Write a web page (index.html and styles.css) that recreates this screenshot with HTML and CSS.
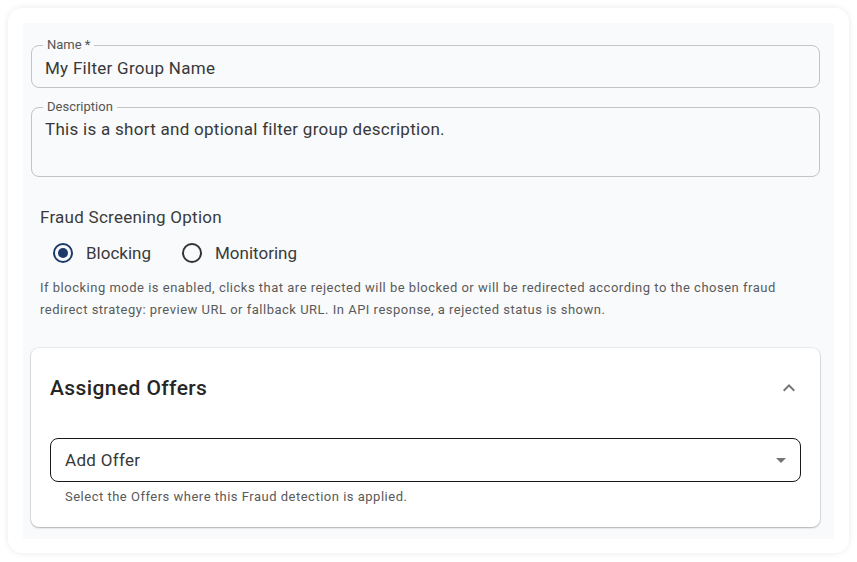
FILE: index.html
```html
<!DOCTYPE html>
<html lang="en">
<head>
  <meta charset="UTF-8">
  <meta name="viewport" content="width=device-width, initial-scale=1.0">
  <title>Filter Group</title>
  <link rel="stylesheet" href="styles.css">
</head>
<body>
  <div class="card">
    <div class="panel">
      <div class="field">
        <span class="field-label">Name *</span>
        <div class="field-value">My Filter Group Name</div>
      </div>
      <div class="field field-multiline">
        <span class="field-label">Description</span>
        <div class="field-value">This is a short and optional filter group description.</div>
      </div>

      <div class="option-group">
        <div class="option-title">Fraud Screening Option</div>
        <div class="radio-row">
          <label class="radio"><span class="radio-circle checked"></span>Blocking</label>
          <label class="radio"><span class="radio-circle"></span>Monitoring</label>
        </div>
        <p class="hint">If blocking mode is enabled, clicks that are rejected will be blocked or will be redirected according to the chosen fraud redirect strategy: preview URL or fallback URL. In API response, a rejected status is shown.</p>
      </div>

      <div class="accordion">
        <div class="accordion-head">
          <h2>Assigned Offers</h2>
          <svg class="icon" viewBox="0 0 24 24" width="24" height="24"><path d="M12 8l-6 6 1.41 1.41L12 10.83l4.59 4.58L18 14z"/></svg>
        </div>
        <div class="select">
          <span>Add Offer</span>
          <svg class="icon" viewBox="0 0 24 24" width="24" height="24"><path d="M7 10l5 5 5-5z"/></svg>
        </div>
        <p class="select-hint">Select the Offers where this Fraud detection is applied.</p>
      </div>
    </div>
  </div>
</body>
</html>
```

FILE: styles.css
```css
body { margin: 0; background: #fff; font-family: Roboto, "Liberation Sans", Arial, sans-serif; color: #333; }

.card { margin: 8px; width: 841px; height: 545px; box-sizing: border-box; padding: 15px; background: #fff; border-radius: 14px; box-shadow: 0 0 6px rgba(0,0,0,0.09); }
.panel { height: 516px; box-sizing: border-box; padding: 22px 14px 12px 8px; background: #f9fafc; }

.field { position: relative; height: 43px; box-sizing: border-box; border: 1px solid #c4c4c4; border-radius: 8px; padding: 2px 13px 0; display: flex; align-items: center; }
.field-multiline { margin-top: 19px; height: 70px; align-items: flex-start; padding-top: 9px; }
.field-label { position: absolute; top: -8px; left: 11px; padding: 0 4px; background: #f9fafc; font-size: 13px; line-height: 14px; color: #555; }
.field-value { font-size: 17px; line-height: 24px; letter-spacing: 0.28px; color: #383838; }

.option-group { padding-left: 9px; }
.option-title { margin-top: 28px; font-size: 17px; line-height: 24px; letter-spacing: 0.25px; color: #3a3a3a; }
.radio-row { margin-top: 10px; height: 28px; display: flex; align-items: center; gap: 31px; padding-left: 13px; }
.radio { display: flex; align-items: center; gap: 13px; font-size: 17px; color: #3a3a3a; }
.radio-circle { width: 20px; height: 20px; box-sizing: border-box; border: 2px solid #333; border-radius: 50%; position: relative; }
.radio-circle.checked { border-color: #1e3a6a; }
.radio-circle.checked::after { content: ""; position: absolute; top: 3px; left: 3px; width: 10px; height: 10px; border-radius: 50%; background: #1e3a6a; }
.hint { margin: 10px 0 0; font-size: 13px; line-height: 22px; letter-spacing: 0.5px; color: #5a5a5a; }

.accordion { margin-top: 27px; height: 179px; box-sizing: border-box; padding: 26px 19px 20px; background: #fff; border-radius: 8px; box-shadow: 0 1px 2px rgba(0,0,0,0.25), 0 0 0 1px rgba(0,0,0,0.06); }
.accordion-head { height: 28px; display: flex; align-items: center; justify-content: space-between; }
.accordion-head h2 { margin: 0; font-size: 21px; font-weight: 500; letter-spacing: 0.4px; color: #262626; }
.icon { fill: #757575; }

.select { margin-top: 36px; height: 44px; box-sizing: border-box; border: 1px solid #1a1a1a; border-radius: 8px; padding: 0 7px 0 14px; display: flex; align-items: center; justify-content: space-between; font-size: 17px; letter-spacing: 0.3px; color: #383838; }
.select-hint { margin: 5px 0 0; padding-left: 15px; font-size: 13px; line-height: 20px; letter-spacing: 0.5px; color: #5a5a5a; }
```
